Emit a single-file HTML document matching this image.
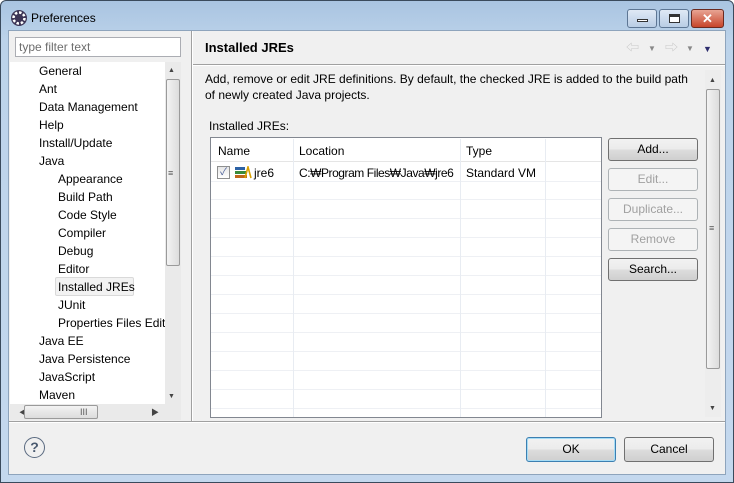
<!DOCTYPE html>
<html><head><style>
*{box-sizing:border-box;margin:0;padding:0}
body{width:734px;height:483px;overflow:hidden;background:#fff;font-family:"Liberation Sans","Noto Sans CJK KR",sans-serif;font-size:12px;color:#000;position:relative}
.a{position:absolute}
.frame{left:0;top:0;width:734px;height:483px;background:linear-gradient(#a9c4e1,#bcd3ea 40px,#c4d8ee);border:1px solid #3a4a5c;border-radius:6px 6px 0 0}
.client{left:8px;top:30px;width:718px;height:445px;background:#f0f0f0;border:1px solid #8ea4bc}
.t{position:absolute;white-space:nowrap;line-height:14px}
.btn{position:absolute;width:90px;height:23px;border:1px solid #707070;border-radius:3px;background:linear-gradient(#f2f2f2 0,#ebebeb 50%,#dddddd 50%,#cfcfcf);text-align:center;line-height:21px}
.dis{border-color:#adb2b5;background:#f4f4f4;color:#a0a0a0}
.hl{position:absolute;height:1px;background:#eef0f4}
.vl{position:absolute;width:1px;background:#e8ecf2}
.sb{position:absolute;background:#eaeaea}
.thumb{position:absolute;border:1px solid #9a9a9a;border-radius:2px;background:linear-gradient(90deg,#f3f3f3,#dcdcdc)}
</style></head><body>
<div class="a frame"></div>
<svg class="a" style="left:10px;top:9px" width="18" height="18" viewBox="0 0 18 18"><circle cx="9" cy="9" r="8" fill="#3d3556"/><circle cx="9" cy="9" r="5.5" fill="none" stroke="#fff" stroke-width="2.5" stroke-dasharray="2.5 1.8"/><circle cx="9" cy="9" r="3" fill="#3d3556"/></svg>
<div class="t" style="left:31px;top:11px;font-size:12px">Preferences</div>
<div class="a" style="left:627px;top:9px;width:30px;height:19px;border:1px solid #5d7694;border-radius:3px;background:linear-gradient(#dfe9f5,#b9cde5)"><div class="a" style="left:9px;top:9px;width:11px;height:3px;border:1px solid #333;background:#fff"></div></div>
<div class="a" style="left:659px;top:9px;width:30px;height:19px;border:1px solid #5d7694;border-radius:3px;background:linear-gradient(#dfe9f5,#b9cde5)"><div class="a" style="left:9px;top:4px;width:11px;height:9px;border:1px solid #333;border-top-width:3px;background:#fff"></div></div>
<div class="a" style="left:691px;top:9px;width:33px;height:19px;border:1px solid #6b2a20;border-radius:3px;background:linear-gradient(#e8a493,#c7452b);color:#fff;font-weight:bold;text-align:center;line-height:17px;font-size:13px">✕</div>
<div class="a client"></div>
<div class="a" style="left:15px;top:37px;width:166px;height:20px;border:1px solid #abadb3;background:#fff"></div>
<div class="t" style="left:19px;top:40px;color:#6d6d6d">type filter text</div>
<div class="a" style="left:10px;top:62px;width:155px;height:342px;background:#fff"></div>
<div class="a" style="left:55px;top:277px;width:79px;height:19px;border:1px solid #d9d9d9;border-radius:2px;background:#f2f2f2"></div>
<div class="t" style="left:39px;top:64px">General</div>
<div class="t" style="left:39px;top:82px">Ant</div>
<div class="t" style="left:39px;top:100px">Data Management</div>
<div class="t" style="left:39px;top:118px">Help</div>
<div class="t" style="left:39px;top:136px">Install/Update</div>
<div class="t" style="left:39px;top:154px">Java</div>
<div class="t" style="left:58px;top:172px">Appearance</div>
<div class="t" style="left:58px;top:190px">Build Path</div>
<div class="t" style="left:58px;top:208px">Code Style</div>
<div class="t" style="left:58px;top:226px">Compiler</div>
<div class="t" style="left:58px;top:244px">Debug</div>
<div class="t" style="left:58px;top:262px">Editor</div>
<div class="t" style="left:58px;top:280px">Installed JREs</div>
<div class="t" style="left:58px;top:298px">JUnit</div>
<div class="t" style="left:58px;top:316px;width:107px;overflow:hidden">Properties Files Editor</div>
<div class="t" style="left:39px;top:334px">Java EE</div>
<div class="t" style="left:39px;top:352px">Java Persistence</div>
<div class="t" style="left:39px;top:370px">JavaScript</div>
<div class="t" style="left:39px;top:388px">Maven</div>
<div class="sb" style="left:165px;top:62px;width:16px;height:342px"></div>
<div class="t" style="left:168px;top:64px;font-size:7px;color:#444">▲</div>
<div class="thumb" style="left:166px;top:79px;width:14px;height:187px"></div>
<div class="t" style="left:168px;top:166px;font-size:9px;color:#555">≡</div>
<div class="t" style="left:168px;top:390px;font-size:7px;color:#444">▼</div>
<div class="sb" style="left:10px;top:404px;width:171px;height:16px"></div>
<div class="t" style="left:19px;top:406px;font-size:8px;color:#444">◀</div>
<div class="thumb" style="left:24px;top:405px;width:74px;height:14px;background:linear-gradient(#f3f3f3,#dcdcdc)"></div>
<div class="t" style="left:80px;top:405px;font-size:9px;color:#555">III</div>
<div class="t" style="left:151px;top:406px;font-size:8px;color:#444">▶</div>
<div class="a" style="left:191px;top:31px;width:1px;height:390px;background:#a0a0a0"></div>
<div class="a" style="left:192px;top:31px;width:1px;height:390px;background:#fff"></div>
<div class="t" style="left:205px;top:41px;font-weight:bold;font-size:13px">Installed JREs</div>
<div class="t" style="left:626px;top:41px;color:#c8c8c8;font-size:13px">⇦</div>
<div class="t" style="left:648px;top:42px;color:#888;font-size:8px">▼</div>
<div class="t" style="left:665px;top:41px;color:#c8c8c8;font-size:13px">⇨</div>
<div class="t" style="left:686px;top:42px;color:#888;font-size:8px">▼</div>
<div class="t" style="left:703px;top:42px;color:#2e2e6e;font-size:9px">▼</div>
<div class="a" style="left:193px;top:64px;width:532px;height:1px;background:#a0a0a0"></div>
<div class="a" style="left:193px;top:65px;width:532px;height:1px;background:#fff"></div>
<div class="t" style="left:205px;top:72px">Add, remove or edit JRE definitions. By default, the checked JRE is added to the build path</div>
<div class="t" style="left:205px;top:88px">of newly created Java projects.</div>
<div class="sb" style="left:705px;top:70px;width:16px;height:347px;background:#ededed"></div>
<div class="t" style="left:709px;top:74px;font-size:7px;color:#444">▲</div>
<div class="thumb" style="left:706px;top:89px;width:14px;height:280px"></div>
<div class="t" style="left:709px;top:221px;font-size:9px;color:#555">≡</div>
<div class="t" style="left:709px;top:402px;font-size:7px;color:#444">▼</div>
<div class="t" style="left:209px;top:119px">Installed JREs:</div>
<div class="a" style="left:210px;top:137px;width:392px;height:281px;border:1px solid #828790;background:#fff"></div>
<div class="t" style="left:218px;top:144px">Name</div>
<div class="t" style="left:299px;top:144px">Location</div>
<div class="t" style="left:466px;top:144px">Type</div>
<div class="hl" style="left:211px;top:161px;width:390px;background:#e5e5e5"></div>
<div class="hl" style="left:211px;top:181px;width:390px"></div>
<div class="hl" style="left:211px;top:199px;width:390px"></div>
<div class="hl" style="left:211px;top:218px;width:390px"></div>
<div class="hl" style="left:211px;top:237px;width:390px"></div>
<div class="hl" style="left:211px;top:256px;width:390px"></div>
<div class="hl" style="left:211px;top:275px;width:390px"></div>
<div class="hl" style="left:211px;top:294px;width:390px"></div>
<div class="hl" style="left:211px;top:313px;width:390px"></div>
<div class="hl" style="left:211px;top:332px;width:390px"></div>
<div class="hl" style="left:211px;top:351px;width:390px"></div>
<div class="hl" style="left:211px;top:370px;width:390px"></div>
<div class="hl" style="left:211px;top:389px;width:390px"></div>
<div class="hl" style="left:211px;top:408px;width:390px"></div>
<div class="vl" style="left:293px;top:139px;height:278px"></div>
<div class="vl" style="left:460px;top:139px;height:278px"></div>
<div class="vl" style="left:545px;top:139px;height:278px"></div>
<div class="a" style="left:217px;top:166px;width:13px;height:13px;border:1px solid #8e8f8f;background:linear-gradient(#e6e6e6,#fff);color:#4a5f97;font-size:10px;line-height:11px;text-align:center">✓</div>
<svg class="a" style="left:235px;top:166px" width="17" height="13"><rect x="0" y="1" width="10" height="3" fill="#2d62a6"/><rect x="0" y="5" width="11" height="3" fill="#3a8a3a"/><rect x="0" y="9" width="12" height="3" fill="#c0661a"/><path d="M10 12 L13 1 L16 12" stroke="#d8a000" stroke-width="1.6" fill="none"/></svg>
<div class="t" style="left:254px;top:166px">jre6</div>
<div class="t" style="left:299px;top:166px;letter-spacing:-0.45px">C:₩Program Files₩Java₩jre6</div>
<div class="t" style="left:466px;top:166px">Standard VM</div>
<div class="btn" style="left:608px;top:138px">Add...</div>
<div class="btn dis" style="left:608px;top:168px">Edit...</div>
<div class="btn dis" style="left:608px;top:198px">Duplicate...</div>
<div class="btn dis" style="left:608px;top:228px">Remove</div>
<div class="btn" style="left:608px;top:258px">Search...</div>
<div class="a" style="left:9px;top:421px;width:716px;height:1px;background:#a0a0a0"></div>
<div class="a" style="left:9px;top:422px;width:716px;height:1px;background:#fff"></div>
<div class="a" style="left:24px;top:437px;width:21px;height:21px;border:1.5px solid #5a6a80;border-radius:50%;text-align:center;line-height:18px;font-weight:bold;font-size:14px;color:#4a5a70">?</div>
<div class="btn" style="left:526px;top:437px;width:90px;height:25px;line-height:23px;border-color:#3c7fb1;box-shadow:inset 0 0 0 1px #a6dcf5">OK</div>
<div class="btn" style="left:624px;top:437px;width:90px;height:25px;line-height:23px">Cancel</div>
</body></html>
